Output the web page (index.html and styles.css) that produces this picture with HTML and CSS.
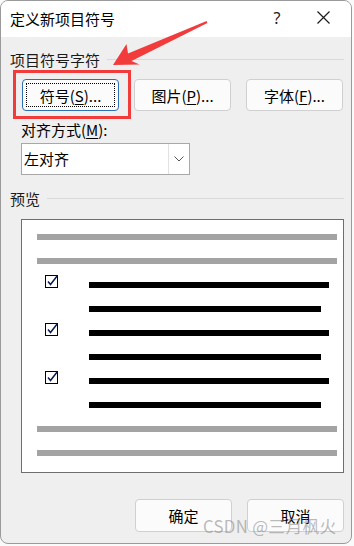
FILE: index.html
```html
<!DOCTYPE html>
<html lang="zh-CN">
<head>
<meta charset="utf-8">
<title>定义新项目符号</title>
<link rel="stylesheet" href="styles.css">
</head>
<body>
<div class="dialog">
  <div class="titlebar">
    <span class="title">定义新项目符号</span>
    <span class="tb-btn help">?</span>
    <span class="tb-btn close">
      <svg width="13" height="13" viewBox="0 0 13 13"><path d="M0.5 0.5 L12.5 12.5 M12.5 0.5 L0.5 12.5" stroke="#1a1a1a" stroke-width="1.2" fill="none"/></svg>
    </span>
  </div>
  <div class="content">
    <div class="section">项目符号字符</div>
    <div class="btn-row">
      <button class="btn focused"><span class="focus-ring">符号(<u>S</u>)...</span></button>
      <button class="btn">图片(<u>P</u>)...</button>
      <button class="btn">字体(<u>F</u>)...</button>
    </div>
    <div class="label">对齐方式(<u>M</u>):</div>
    <div class="select">
      <span class="select-text">左对齐</span>
      <span class="select-arrow">
        <svg width="10" height="6" viewBox="0 0 10 6"><path d="M0.5 0.5 L5 5 L9.5 0.5" stroke="#555" stroke-width="1" fill="none"/></svg>
      </span>
    </div>
    <div class="section preview-head">预览</div>
    <div class="preview">
      <div class="bar gray"></div>
      <div class="bar gray"></div>
      <div class="row">
        <span class="check"><svg width="14" height="14" viewBox="0 0 14 14"><rect x="0.5" y="1.5" width="12" height="12" fill="#fff" stroke="#000" stroke-width="1"/><path d="M3 7.5 L5.5 10.5 L12.5 1.5" stroke="#0a1a50" stroke-width="1.5" fill="none"/></svg></span>
        <div class="bar black long"></div>
      </div>
      <div class="row indent"><div class="bar black short"></div></div>
      <div class="row">
        <span class="check"><svg width="14" height="14" viewBox="0 0 14 14"><rect x="0.5" y="1.5" width="12" height="12" fill="#fff" stroke="#000" stroke-width="1"/><path d="M3 7.5 L5.5 10.5 L12.5 1.5" stroke="#0a1a50" stroke-width="1.5" fill="none"/></svg></span>
        <div class="bar black long"></div>
      </div>
      <div class="row indent"><div class="bar black short"></div></div>
      <div class="row">
        <span class="check"><svg width="14" height="14" viewBox="0 0 14 14"><rect x="0.5" y="1.5" width="12" height="12" fill="#fff" stroke="#000" stroke-width="1"/><path d="M3 7.5 L5.5 10.5 L12.5 1.5" stroke="#0a1a50" stroke-width="1.5" fill="none"/></svg></span>
        <div class="bar black long"></div>
      </div>
      <div class="row indent"><div class="bar black short"></div></div>
      <div class="bar gray"></div>
      <div class="bar gray"></div>
    </div>
    <div class="footer">
      <button class="btn">确定</button>
      <button class="btn">取消</button>
    </div>
  </div>
  <div class="red-box"></div>
  <svg class="arrow" width="352" height="120" viewBox="0 0 352 120">
    <polygon points="113,65 126.5,44 128,53.5 206.6,21.1 207.4,22.9 131.5,61 139.5,64.5" fill="#f23c3c"/>
  </svg>
  <div class="watermark">CSDN @三月枫火</div>
</div>
</body>
</html>
```
FILE: styles.css
```css
* { box-sizing: border-box; }
html, body { margin: 0; padding: 0; background: #fafafa; }
body {
  font-family: "Noto Sans CJK SC", "Noto Sans", sans-serif;
  font-size: 15px;
  color: #000;
  width: 354px;
  height: 546px;
  overflow: hidden;
}
.dialog {
  position: relative;
  width: 352px;
  height: 544px;
  border: 1px solid #9a9a9a;
  border-radius: 8px;
  background: #efefef;
  overflow: hidden;
}
.titlebar {
  display: flex;
  align-items: center;
  height: 36px;
  background: #fff;
  padding-left: 9px;
  padding-right: 5px;
}
.title { flex: 1; font-size: 15px; line-height: 20px; }
.tb-btn {
  width: 46px;
  display: flex;
  justify-content: center;
  align-items: center;
  font-size: 16px;
  line-height: 20px;
  height: 36px;
}
.help { color: #222; font-family: "Noto Sans", sans-serif; padding-bottom: 2px; }
.close { padding-bottom: 3px; }
.content { padding: 0 7px 0 9px; }
.section {
  display: flex;
  align-items: center;
  gap: 7px;
  margin-top: 13px;
  line-height: 20px;
  height: 20px;
  color: #1a1a1a;
}
.section::after {
  content: "";
  flex: 1;
  height: 1px;
  background: #d9d9d9;
  margin-top: -2px;
}
.btn-row {
  display: flex;
  gap: 15px;
  margin: 9px 0 0 12px;
}
.btn {
  width: 97px;
  height: 32px;
  border: 1px solid #d0d0d0;
  border-radius: 4px;
  background: #fbfbfb;
  font-family: inherit;
  font-size: 15px;
  color: #000;
  padding: 0;
  display: flex;
  align-items: center;
  justify-content: center;
}
.btn.focused {
  border: 1px solid #2f6fb3;
  padding: 3px;
}
.focus-ring {
  display: flex;
  width: 100%;
  height: 100%;
  align-items: center;
  justify-content: center;
  border: 1px dotted #000;
}
u { text-decoration: underline; text-underline-offset: 2px; }
.label {
  margin: 9px 0 0 11px;
  line-height: 20px;
  height: 20px;
}
.select {
  display: flex;
  margin: 3px 0 0 11px;
  width: 169px;
  height: 32px;
  background: #fff;
  border: 1px solid #a8a8a8;
}
.select-text { flex: 1; padding-left: 2px; line-height: 30px; }
.select-arrow {
  width: 21px;
  border-left: 1px solid #e2e2e2;
  display: flex;
  align-items: center;
  justify-content: center;
}
.preview-head { margin-top: 14px; }
.preview {
  margin: 10px 0 0 11px;
  width: 323px;
  height: 254px;
  background: #fff;
  border: 1px solid #6e6e6e;
  padding: 14px 6px 16px 15px;
  display: flex;
  flex-direction: column;
  gap: 18px;
}
.bar { height: 6px; flex-shrink: 0; }
.bar.gray { background: #a3a3a3; width: 300px; }
.bar.black { background: #000; }
.bar.long { width: 240px; margin-left: 30px; }
.bar.short { width: 232px; }
.row { display: flex; align-items: flex-start; height: 6px; }
.row.indent { padding-left: 52px; }
.check {
  display: block;
  width: 14px;
  height: 14px;
  margin: -8px 0 0 8px;
}
.check svg { display: block; }
.footer {
  display: flex;
  justify-content: flex-end;
  gap: 15px;
  margin-top: 26px;
  padding-right: 0;
}
.footer .btn { height: 33px; }
.red-box {
  position: absolute;
  left: 12px;
  top: 69px;
  width: 118px;
  height: 49px;
  border: 3px solid #f23c3c;
}
.arrow {
  position: absolute;
  left: -1px;
  top: -1px;
}
.watermark {
  position: absolute;
  left: 202px;
  top: 515px;
  font-size: 16.8px;
  line-height: 20px;
  color: rgba(130, 130, 130, 0.55);
  font-family: "Noto Sans CJK SC", "Noto Sans", sans-serif;
  letter-spacing: 0.3px;
}
```
